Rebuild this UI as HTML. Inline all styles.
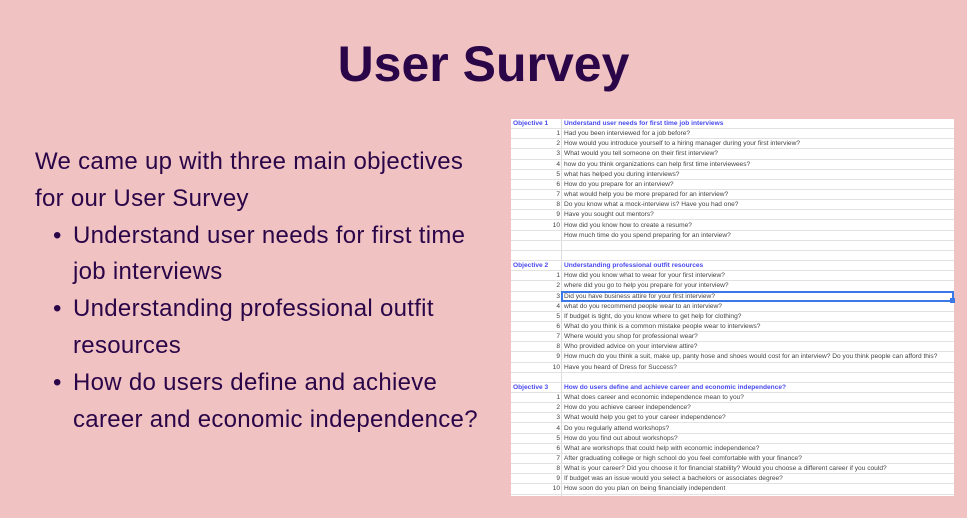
<!DOCTYPE html>
<html><head><meta charset="utf-8"><style>
*{margin:0;padding:0;box-sizing:border-box}
body{width:967px;height:518px;background:#f0c2c2;font-family:"Liberation Sans",Arial,sans-serif;position:relative;overflow:hidden;color:#2a0548}
h1{position:absolute;top:34px;left:0;width:967px;text-align:center;font-size:50px;font-weight:bold;color:#2a0548;line-height:60px}
.body{position:absolute;left:35px;top:144px;font-size:24px;letter-spacing:0.3px;line-height:36.8px;width:520px;white-space:nowrap}
.b{position:relative;padding-left:38px}
.b:before{content:"•";position:absolute;left:18px}
.sheet{position:absolute;left:511px;top:119px;width:443px;height:377px;background:#fff}
.r{position:absolute;left:0;width:443px;height:10.15px;border-bottom:1px solid #e2e2e2;font-size:6.6px;line-height:10px;color:#444;white-space:nowrap}
.n{position:absolute;left:0;width:49px;text-align:right}
.o{position:absolute;left:2px;color:#4a4af0;font-weight:bold}
.t{position:absolute;left:53px}
.h{color:#4a4af0;font-weight:bold}
.vl{position:absolute;left:50px;top:0;width:1px;height:377px;background:#ddd}
.sel{position:absolute;left:50px;top:172px;width:393px;height:11px;border:2px solid #3b78e7}
.hd{position:absolute;left:439px;top:179px;width:5px;height:5px;background:#3b78e7}
</style></head><body>
<h1>User Survey</h1>
<div class="body">
<div>We came up with three main objectives<br>for our User Survey</div>
<div class="b">Understand user needs for first time<br>job interviews</div>
<div class="b">Understanding professional outfit<br>resources</div>
<div class="b">How do users define and achieve<br>career and economic independence?</div>
</div>
<div class="sheet" id="s"><div class="vl"></div>
<div class="r" style="top:0"><span class="o">Objective 1</span><span class="t h">Understand user needs for first time job interviews</span></div>
<div class="r" style="top:10.15px"><span class="n">1</span><span class="t">Had you been interviewed for a job before?</span></div>
<div class="r" style="top:20.3px"><span class="n">2</span><span class="t">How would you introduce yourself to a hiring manager during your first interview?</span></div>
<div class="r" style="top:30.45px"><span class="n">3</span><span class="t">What would you tell someone on their first interview?</span></div>
<div class="r" style="top:40.6px"><span class="n">4</span><span class="t">how do you think organizations can help first time interviewees?</span></div>
<div class="r" style="top:50.75px"><span class="n">5</span><span class="t">what has helped you during interviews?</span></div>
<div class="r" style="top:60.9px"><span class="n">6</span><span class="t">How do you prepare for an interview?</span></div>
<div class="r" style="top:71.05px"><span class="n">7</span><span class="t">what would help you be more prepared for an interview?</span></div>
<div class="r" style="top:81.2px"><span class="n">8</span><span class="t">Do you know what a mock-interview is? Have you had one?</span></div>
<div class="r" style="top:91.35px"><span class="n">9</span><span class="t">Have you sought out mentors?</span></div>
<div class="r" style="top:101.5px"><span class="n">10</span><span class="t">How did you know how to create a resume?</span></div>
<div class="r" style="top:111.65px"><span class="t">How much time do you spend preparing for an interview?</span></div>
<div class="r" style="top:121.8px"></div>
<div class="r" style="top:131.95px"></div>
<div class="r" style="top:142.1px"><span class="o">Objective 2</span><span class="t h">Understanding professional outfit resources</span></div>
<div class="r" style="top:152.25px"><span class="n">1</span><span class="t">How did you know what to wear for your first interview?</span></div>
<div class="r" style="top:162.4px"><span class="n">2</span><span class="t">where did you go to help you prepare for your interview?</span></div>
<div class="r" style="top:172.55px"><span class="n">3</span><span class="t">Did you have business attire for your first interview?</span></div>
<div class="r" style="top:182.7px"><span class="n">4</span><span class="t">what do you recommend people wear to an interview?</span></div>
<div class="r" style="top:192.85px"><span class="n">5</span><span class="t">If budget is tight, do you know where to get help for clothing?</span></div>
<div class="r" style="top:203px"><span class="n">6</span><span class="t">What do you think is a common mistake people wear to interviews?</span></div>
<div class="r" style="top:213.15px"><span class="n">7</span><span class="t">Where would you shop for professional wear?</span></div>
<div class="r" style="top:223.3px"><span class="n">8</span><span class="t">Who provided advice on your interview attire?</span></div>
<div class="r" style="top:233.45px"><span class="n">9</span><span class="t">How much do you think a suit, make up, panty hose and shoes would cost for an interview? Do you think people can afford this?</span></div>
<div class="r" style="top:243.6px"><span class="n">10</span><span class="t">Have you heard of Dress for Success?</span></div>
<div class="r" style="top:253.75px"></div>
<div class="r" style="top:263.9px"><span class="o">Objective 3</span><span class="t h">How do users define and achieve career and economic independence?</span></div>
<div class="r" style="top:274.05px"><span class="n">1</span><span class="t">What does career and economic independence mean to you?</span></div>
<div class="r" style="top:284.2px"><span class="n">2</span><span class="t">How do you achieve career independence?</span></div>
<div class="r" style="top:294.35px"><span class="n">3</span><span class="t">What would help you get to your career independence?</span></div>
<div class="r" style="top:304.5px"><span class="n">4</span><span class="t">Do you regularly attend workshops?</span></div>
<div class="r" style="top:314.65px"><span class="n">5</span><span class="t">How do you find out about workshops?</span></div>
<div class="r" style="top:324.8px"><span class="n">6</span><span class="t">What are workshops that could help with economic independence?</span></div>
<div class="r" style="top:334.95px"><span class="n">7</span><span class="t">After graduating college or high school do you feel comfortable with your finance?</span></div>
<div class="r" style="top:345.1px"><span class="n">8</span><span class="t">What is your career? Did you choose it for financial stability? Would you choose a different career if you could?</span></div>
<div class="r" style="top:355.25px"><span class="n">9</span><span class="t">If budget was an issue would you select a bachelors or associates degree?</span></div>
<div class="r" style="top:365.4px"><span class="n">10</span><span class="t">How soon do you plan on being financially independent</span></div>
<div class="sel"></div><div class="hd"></div>
</div>
</body></html>
